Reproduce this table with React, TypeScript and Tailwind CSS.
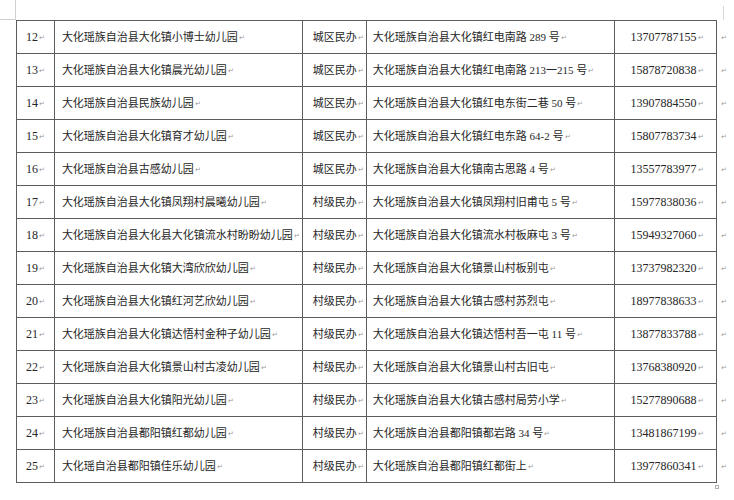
import React from "react";

type Row = { no: number; name: string; kind: string; addr: string; phone: string };

const rows: Row[] = [
  { no: 12, name: "大化瑶族自治县大化镇小博士幼儿园", kind: "城区民办", addr: "大化瑶族自治县大化镇红电南路 289 号", phone: "13707787155" },
  { no: 13, name: "大化瑶族自治县大化镇晨光幼儿园", kind: "城区民办", addr: "大化瑶族自治县大化镇红电南路 213一215 号", phone: "15878720838" },
  { no: 14, name: "大化瑶族自治县民族幼儿园", kind: "城区民办", addr: "大化瑶族自治县大化镇红电东街二巷 50 号", phone: "13907884550" },
  { no: 15, name: "大化瑶族自治县大化镇育才幼儿园", kind: "城区民办", addr: "大化瑶族自治县大化镇红电东路 64-2 号", phone: "15807783734" },
  { no: 16, name: "大化瑶族自治县古感幼儿园", kind: "城区民办", addr: "大化瑶族自治县大化镇南古思路 4 号", phone: "13557783977" },
  { no: 17, name: "大化瑶族自治县大化镇凤翔村晨曦幼儿园", kind: "村级民办", addr: "大化瑶族自治县大化镇凤翔村旧甫屯 5 号", phone: "15977838036" },
  { no: 18, name: "大化瑶族自治县大化县大化镇流水村盼盼幼儿园", kind: "村级民办", addr: "大化瑶族自治县大化镇流水村板麻屯 3 号", phone: "15949327060" },
  { no: 19, name: "大化瑶族自治县大化镇大湾欣欣幼儿园", kind: "村级民办", addr: "大化瑶族自治县大化镇景山村板别屯", phone: "13737982320" },
  { no: 20, name: "大化瑶族自治县大化镇红河艺欣幼儿园", kind: "村级民办", addr: "大化瑶族自治县大化镇古感村苏烈屯", phone: "18977838633" },
  { no: 21, name: "大化瑶族自治县大化镇达悟村金种子幼儿园", kind: "村级民办", addr: "大化瑶族自治县大化镇达悟村吾一屯 11 号", phone: "13877833788" },
  { no: 22, name: "大化瑶族自治县大化镇景山村古凌幼儿园", kind: "村级民办", addr: "大化瑶族自治县大化镇景山村古旧屯", phone: "13768380920" },
  { no: 23, name: "大化瑶族自治县大化镇阳光幼儿园", kind: "村级民办", addr: "大化瑶族自治县大化镇古感村局劳小学", phone: "15277890688" },
  { no: 24, name: "大化瑶族自治县都阳镇红都幼儿园", kind: "村级民办", addr: "大化瑶族自治县都阳镇都岩路 34 号", phone: "13481867199" },
  { no: 25, name: "大化瑶自治县都阳镇佳乐幼儿园", kind: "村级民办", addr: "大化瑶族自治县都阳镇红都街上", phone: "13977860341" },
];

// Word paragraph mark
const Mark = () => <span className="text-[7px] text-[#9a9a9a] ml-px align-middle">↵</span>;

const cell = "border border-[#5c5c5c] align-middle whitespace-nowrap";

export default function App() {
  return (
    <div
      className="w-[734px] h-[500px] bg-white text-[#262626] overflow-hidden"
      style={{ fontFamily: '"Liberation Serif", "Noto Sans CJK SC", serif' }}
    >
      {/* Margin corner marks */}
      <div className="flex h-[20px]">
        <div className="w-[16px] border-r border-b border-[#d0d0d0]" />
        <div className="flex-1" />
        <div className="w-[11px] mt-[6px] border-l border-[#d6d6d6]" />
      </div>

      <div className="pl-[16px]">
        <table className="border-collapse table-fixed">
          <colgroup>
            <col className="w-[38px]" />
            <col className="w-[248px]" />
            <col className="w-[64px]" />
            <col className="w-[248px]" />
            <col className="w-[102px]" />
            <col className="w-[18px]" />
          </colgroup>
          <tbody>
            {rows.map((r) => (
              <tr key={r.no} className="h-[33px]">
                <td className={`${cell} text-center text-[12px]`}>
                  {r.no}
                  <Mark />
                </td>
                <td className={`${cell} pl-[7px] text-[11px]`}>
                  {r.name}
                  <Mark />
                </td>
                <td className={`${cell} pl-[10px] text-[11px]`}>
                  {r.kind}
                  <Mark />
                </td>
                <td className={`${cell} pl-[6px] text-[11px]`}>
                  {r.addr}
                  <Mark />
                </td>
                <td className={`${cell} text-center text-[12px] pl-[4px]`}>
                  {r.phone}
                  <Mark />
                </td>
                <td className="align-middle pl-[3px]">
                  <Mark />
                </td>
              </tr>
            ))}
          </tbody>
        </table>
        {/* end-of-table marker */}
        <div className="ml-[699px] mt-[2px] w-[4px] h-[4px] border border-[#b0b0b0]" />
      </div>
    </div>
  );
}
